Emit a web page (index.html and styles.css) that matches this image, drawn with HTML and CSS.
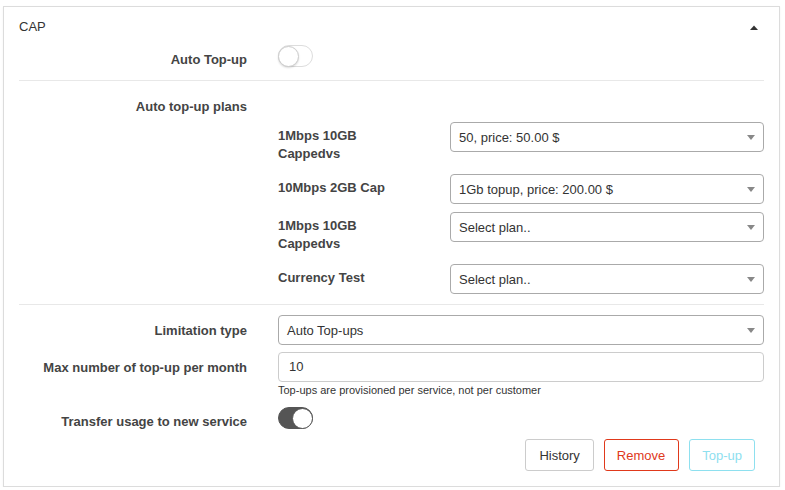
FILE: index.html
```html
<!DOCTYPE html>
<html>
<head>
<meta charset="utf-8">
<link rel="stylesheet" href="styles.css">
</head>
<body>
<div class="card">
  <div class="card-header">
    <span class="title">CAP</span>
    <svg class="caret" width="8" height="5" viewBox="0 0 8 5"><path d="M0 5 L4 0.5 L8 5 Z" fill="#333"/></svg>
  </div>

  <div class="row row-toggle first">
    <div class="label">Auto Top-up</div>
    <div class="control"><span class="switch"><span class="knob"></span></span></div>
  </div>

  <div class="divider div-top"></div>

  <div class="row plans-head">
    <div class="label">Auto top-up plans</div>
    <div class="control"></div>
  </div>

  <div class="row">
    <div class="label"></div>
    <div class="control plans">
      <div class="plan">
        <div class="plan-label">1Mbps 10GB Cappedvs</div>
        <div class="select"><span>50, price: 50.00 $</span><i class="arrow"></i></div>
      </div>
      <div class="plan">
        <div class="plan-label">10Mbps 2GB Cap</div>
        <div class="select"><span>1Gb topup, price: 200.00 $</span><i class="arrow"></i></div>
      </div>
      <div class="plan">
        <div class="plan-label">1Mbps 10GB Cappedvs</div>
        <div class="select"><span>Select plan..</span><i class="arrow"></i></div>
      </div>
      <div class="plan last">
        <div class="plan-label">Currency Test</div>
        <div class="select"><span>Select plan..</span><i class="arrow"></i></div>
      </div>
    </div>
  </div>

  <div class="divider div-bottom"></div>

  <div class="row row-field">
    <div class="label">Limitation type</div>
    <div class="control"><div class="select"><span>Auto Top-ups</span><i class="arrow"></i></div></div>
  </div>

  <div class="row row-field max-row">
    <div class="label">Max number of top-up per month</div>
    <div class="control">
      <div class="input">10</div>
      <div class="help">Top-ups are provisioned per service, not per customer</div>
    </div>
  </div>

  <div class="row row-toggle transfer">
    <div class="label">Transfer usage to new service</div>
    <div class="control"><span class="switch on"><span class="knob"></span></span></div>
  </div>

  <div class="actions">
    <button class="btn btn-default">History</button>
    <button class="btn btn-danger">Remove</button>
    <button class="btn btn-info">Top-up</button>
  </div>
</div>
</body>
</html>
```

FILE: styles.css
```css
* { box-sizing: border-box; }
html, body { margin: 0; padding: 0; background: #fff; }
body {
  font-family: "Liberation Sans", Arial, sans-serif;
  font-size: 13px;
  color: #333;
}
.card {
  margin: 6px 0 0 3px;
  width: 777px;
  height: 481px;
  border: 1px solid #dcdcdc;
  box-shadow: 0 1px 2px rgba(0,0,0,0.06);
  padding: 11px 15px 0 15px;
  background: #fff;
}
.card-header {
  display: flex;
  justify-content: space-between;
  align-items: center;
  line-height: 18px;
  height: 18px;
  padding-right: 6px;
}
.title { font-size: 13px; color: #333; }
.caret { margin-top: 1px; }

.row {
  display: grid;
  grid-template-columns: 228px 1fr;
  column-gap: 31px;
}
.label {
  text-align: right;
  font-weight: bold;
  color: #444;
  line-height: 18px;
  padding-top: 7px;
}
.row-toggle .label { padding-top: 6px; }
.first { margin-top: 9px; }
.divider { height: 1px; background: #e8e8e8; }
.div-top { margin-top: 11px; }
.plans-head { margin-top: 10px; }
.plans-head .label { padding-top: 7px; height: 31px; }

.plans { display: flex; flex-direction: column; }
.plan {
  display: grid;
  grid-template-columns: 140px 1fr;
  column-gap: 32px;
  margin-bottom: 8px;
}
.plan.last { margin-bottom: 0; }
.plan-label {
  font-weight: bold;
  color: #444;
  line-height: 18px;
  padding: 5px 0 3px;
}
.div-bottom { margin-top: 10px; }

.select {
  height: 30px;
  border: 1px solid #aaa;
  border-radius: 4px;
  display: flex;
  align-items: center;
  justify-content: space-between;
  padding: 0 8px 0 8px;
  color: #333;
  background: #fff;
}
.arrow {
  width: 0; height: 0;
  border-left: 4px solid transparent;
  border-right: 4px solid transparent;
  border-top: 5px solid #888;
  margin-top: 1px;
}
.row-field { margin-top: 10px; }
.max-row { margin-top: 7px; }
.input {
  height: 30px;
  border: 1px solid #ccc;
  border-radius: 4px;
  line-height: 28px;
  padding-left: 10px;
  color: #333;
}
.help {
  font-size: 11px;
  line-height: 15px;
  margin-top: 1px;
  color: #333;
}
.transfer { margin-top: 9px; }

.switch {
  display: flex;
  align-items: center;
  width: 35px;
  height: 22px;
  border: 1px solid #ddd;
  border-radius: 11px;
  background: #fff;
}
.switch .knob {
  width: 21px;
  height: 21px;
  border-radius: 50%;
  background: #fff;
  border: 1px solid #ccc;
  box-shadow: 0 1px 2px rgba(0,0,0,0.15);
  margin-left: -1px;
}
.switch.on {
  background: #555;
  border-color: #555;
  justify-content: flex-end;
}
.switch.on .knob {
  border-color: #555;
  margin-left: 0;
  margin-right: -1px;
  box-shadow: none;
}

.actions {
  display: flex;
  justify-content: flex-end;
  gap: 10px;
  margin-top: 8px;
  padding-right: 9px;
}
.btn {
  height: 32px;
  font-family: "Liberation Sans", Arial, sans-serif;
  font-size: 13px;
  border-radius: 3px;
  background: #fff;
  padding: 0 13px;
  border: 1px solid #ccc;
  cursor: pointer;
}
.btn-default { color: #333; border-color: #ccc; }
.btn-danger { color: #e0391b; border-color: #e0391b; padding: 0 13px 0 12px; }
.btn-info { color: #8ee0ef; border-color: #8ee0ef; padding: 0 12px; }
```
